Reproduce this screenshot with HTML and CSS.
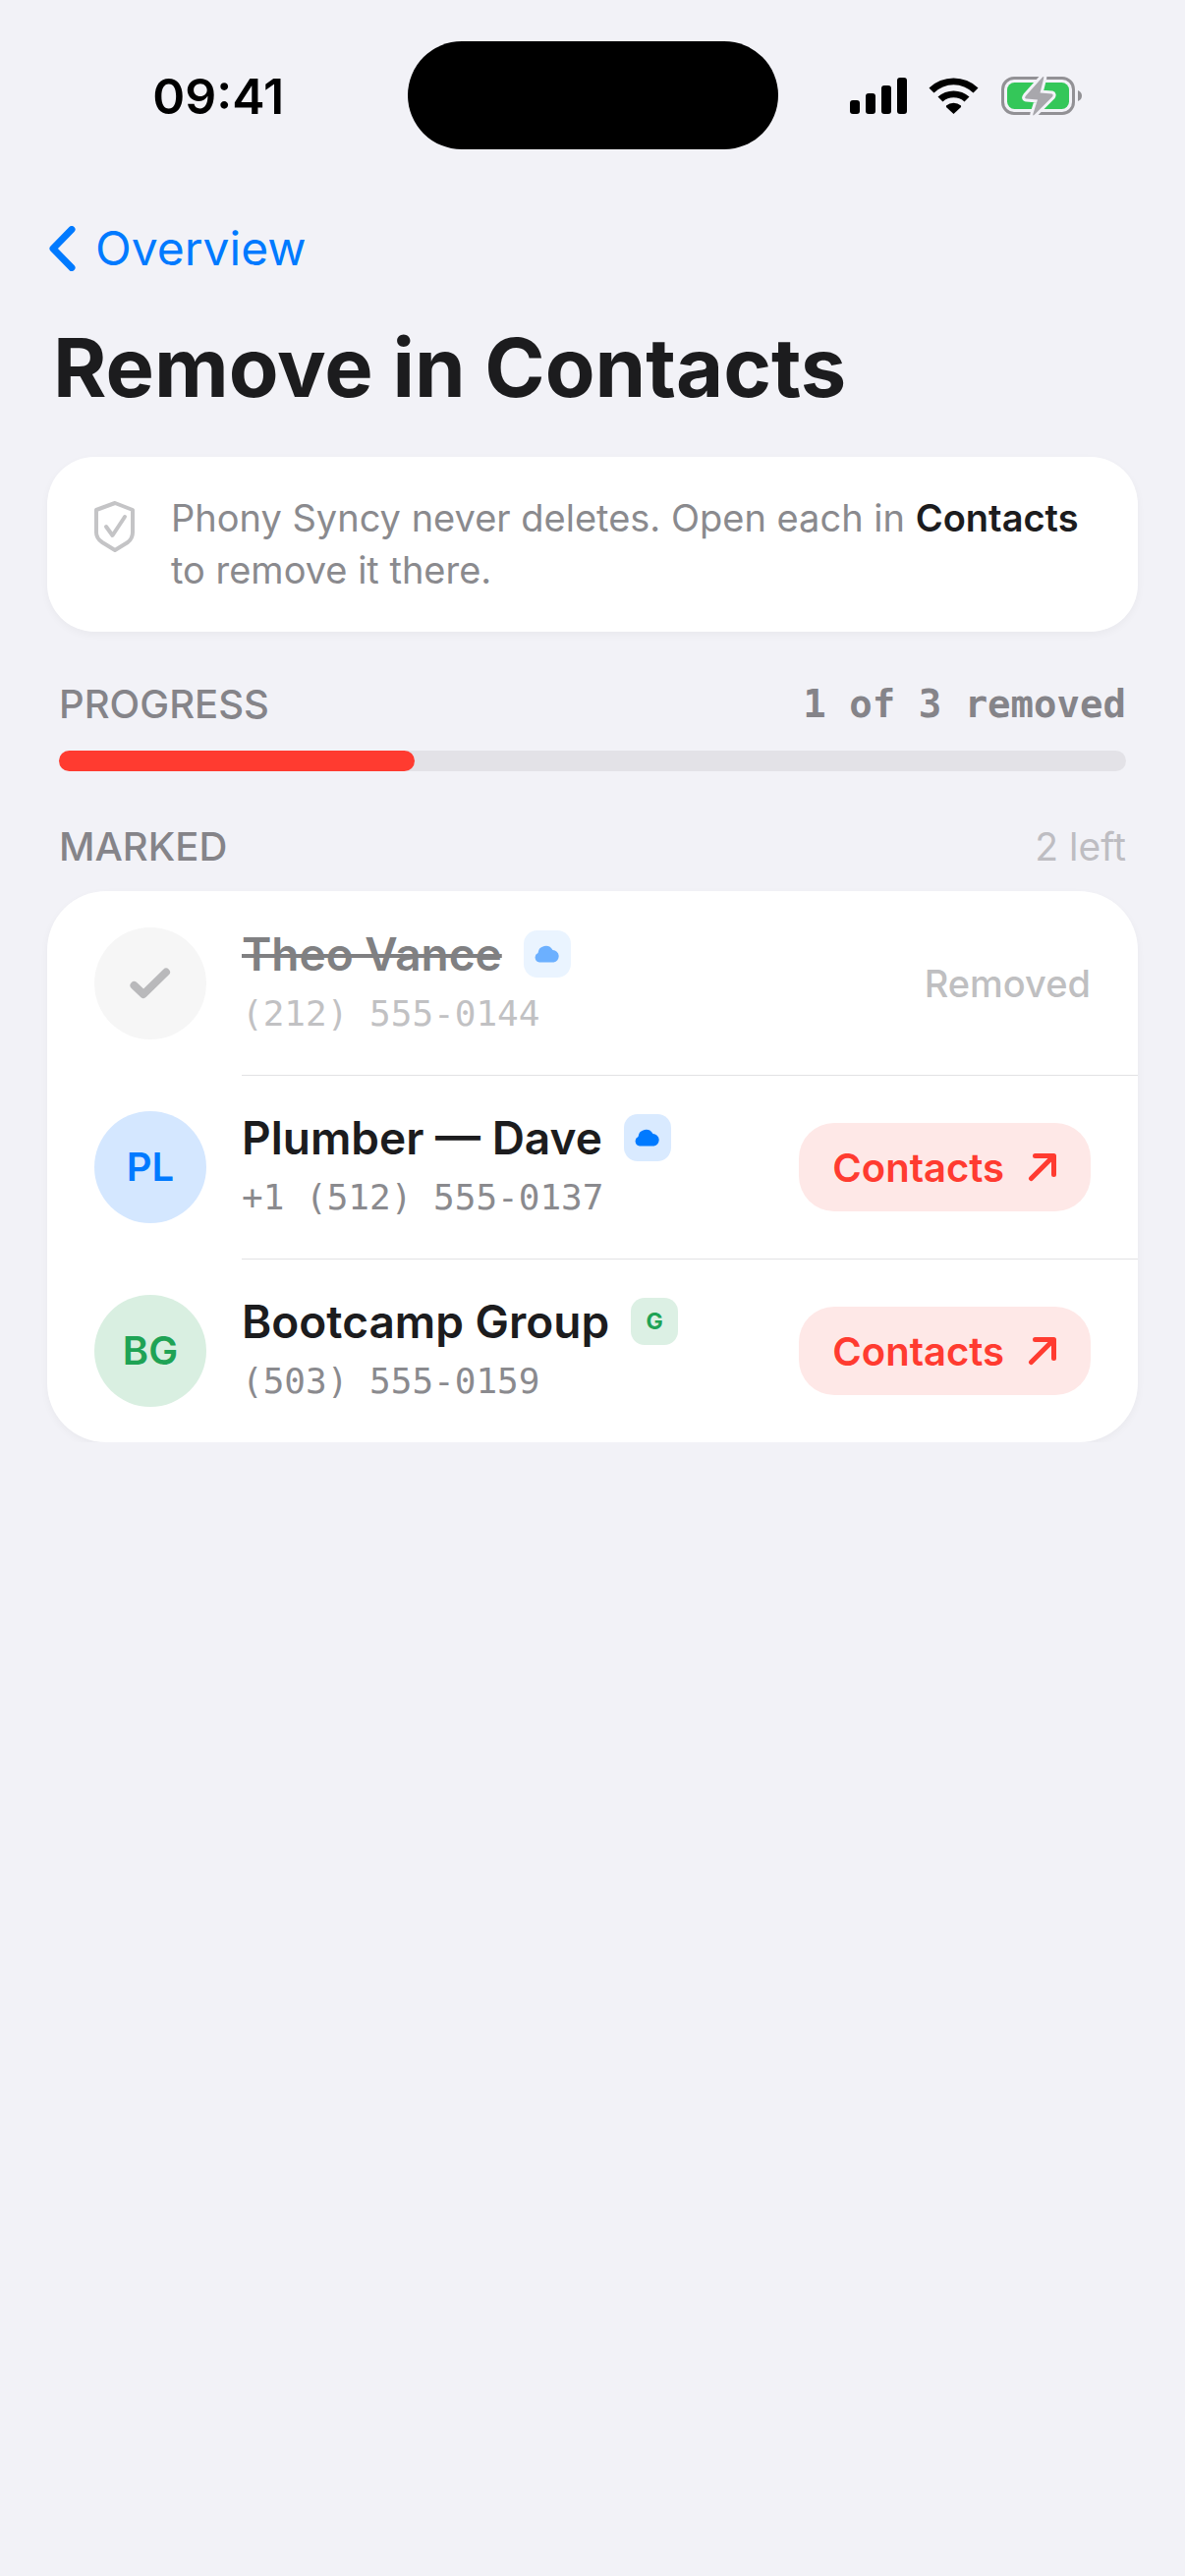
FILE: index.html
```html
<!DOCTYPE html>
<html lang="en">
<head>
<meta charset="utf-8">
<meta name="viewport" content="width=device-width, initial-scale=1">
<title>Remove in Contacts</title>
<link rel="stylesheet" href="styles.css">
</head>
<body>
<header class="status">
  <time class="status-time">09:41</time>
  <div class="island"></div>
  <div class="status-icons">
    <svg width="58" height="38" viewBox="0 0 58 38" aria-hidden="true">
      <rect x="0" y="23" width="10" height="14" rx="3"/>
      <rect x="16" y="16" width="10" height="21" rx="3"/>
      <rect x="32" y="8" width="10" height="29" rx="3"/>
      <rect x="48" y="0" width="10" height="37" rx="3"/>
    </svg>
    <svg width="52" height="38" viewBox="0 0 52 38" aria-hidden="true">
      <path d="M0.500 10.500A36 36 0 0 1 50.500 10.500L45.500 15.500A28.500 28.500 0 0 0 5.500 15.500Z"/>
      <path d="M9.500 19.500A24 24 0 0 1 41.500 19.500L36.500 24.500A16.500 16.500 0 0 0 14.500 24.500Z"/>
      <path d="M18 28.500A12 12 0 0 1 33 28.500Q33.500 29.500 32.500 30.500L25.500 37L18.500 30.500Q17.500 29.500 18 28.500Z"/>
    </svg>
    <svg width="84" height="42" viewBox="0 0 84 42" aria-hidden="true">
      <rect x="1.500" y="2.500" width="72" height="36" rx="11.500" fill="none" stroke="#929195" stroke-width="3"/>
      <rect x="6" y="7" width="63" height="27" rx="7.500" fill="#34c759"/>
      <path d="M78 15Q82 16.500 82 20.500Q82 24.500 78 26Z" fill="#929195"/>
      <path d="M42 1.500Q44 0 43 3.500L39.500 17.500L51.500 18.500Q53.500 19 52 21.500L34 39.500Q31.500 42 32.500 38.500L37 24.500L25.500 23.500Q23 23 25 20.500Z" fill="#a8a7ac" stroke="#f2f2f7" stroke-width="6" paint-order="stroke" stroke-linejoin="round"/>
    </svg>
  </div>
</header>

<main class="page">
  <nav>
    <a class="back" href="#">
      <svg width="28" height="46" viewBox="0 0 28 46" aria-hidden="true"><path d="M23 3.500L4 23L23 42.500" fill="none" stroke="currentColor" stroke-width="7" stroke-linecap="round" stroke-linejoin="round"/></svg>
      Overview
    </a>
  </nav>
  <h1 class="title">Remove in Contacts</h1>

  <section class="note">
    <svg class="note-icon" width="42" height="52" viewBox="0 0 42 52" fill="none" stroke="#c4c4c6" stroke-linecap="round" stroke-linejoin="round" aria-hidden="true">
      <path d="M21 2L39 9V32Q39 38 34 42L21 50L8 42Q2 38 2 32V9Z" stroke-width="4"/>
      <path d="M12 26L18.500 35L31 16" stroke-width="4"/>
    </svg>
    <p class="note-text">Phony Syncy never deletes. Open each in <strong>Contacts</strong> to remove it there.</p>
  </section>

  <section class="progress">
    <div class="section-head">
      <h2 class="section-title" id="progress-label">PROGRESS</h2>
      <span class="count">1 of 3 removed</span>
    </div>
    <div class="track" role="progressbar" aria-labelledby="progress-label" aria-valuemin="0" aria-valuemax="3" aria-valuenow="1"><div class="fill" style="width: 33.300%"></div></div>
  </section>

  <section class="marked">
    <div class="section-head">
      <h2 class="section-title">MARKED</h2>
      <span class="left">2 left</span>
    </div>
    <ul class="list">
      <li class="row removed">
        <span class="avatar">
          <svg width="42" height="32" viewBox="0 0 42 32" aria-hidden="true"><path d="M4.500 18L14 27L37 4.500" fill="none" stroke="currentColor" stroke-width="8" stroke-linecap="round" stroke-linejoin="round"/></svg>
        </span>
        <div class="body">
          <div class="who">
            <div class="name-line">
              <s class="name">Theo Vance</s>
              <span class="badge cloud"><svg width="26" height="18" viewBox="0 0 26 18" aria-hidden="true"><path d="M5 17.500A5 5 0 0 1 3.500 8A8 8 0 0 1 18.500 5A6.300 6.300 0 0 1 19.500 17.500Z"/></svg></span>
            </div>
            <div class="phone">(212) 555-0144</div>
          </div>
          <span class="state">Removed</span>
        </div>
      </li>
      <li class="row">
        <span class="avatar blue">PL</span>
        <div class="body">
          <div class="who">
            <div class="name-line">
              <span class="name">Plumber — Dave</span>
              <span class="badge cloud"><svg width="26" height="18" viewBox="0 0 26 18" aria-hidden="true"><path d="M5 17.500A5 5 0 0 1 3.500 8A8 8 0 0 1 18.500 5A6.300 6.300 0 0 1 19.500 17.500Z"/></svg></span>
            </div>
            <div class="phone">+1 (512) 555-0137</div>
          </div>
          <button class="open" type="button">Contacts
            <svg width="30" height="30" viewBox="0 0 30 30" aria-hidden="true"><path d="M3.500 26.500L26 4M7.500 3.500H26.500V22.500" fill="none" stroke="currentColor" stroke-width="5" stroke-linecap="round" stroke-linejoin="round"/></svg>
          </button>
        </div>
      </li>
      <li class="row">
        <span class="avatar green">BG</span>
        <div class="body">
          <div class="who">
            <div class="name-line">
              <span class="name">Bootcamp Group</span>
              <span class="badge google">G</span>
            </div>
            <div class="phone">(503) 555-0159</div>
          </div>
          <button class="open" type="button">Contacts
            <svg width="30" height="30" viewBox="0 0 30 30" aria-hidden="true"><path d="M3.500 26.500L26 4M7.500 3.500H26.500V22.500" fill="none" stroke="currentColor" stroke-width="5" stroke-linecap="round" stroke-linejoin="round"/></svg>
          </button>
        </div>
      </li>
    </ul>
  </section>
</main>
</body>
</html>
```
FILE: styles.css
```css
* { box-sizing: border-box; }

body {
  margin: 0;
  background: #f2f2f7;
  color: #1c1c1e;
  font-family: Inter, "Liberation Sans", sans-serif;
  font-size: 38px;
}

h1, h2, p, ul { margin: 0; padding: 0; }

.status {
  display: grid;
  grid-template-columns: 1fr 377px 1fr;
  align-items: center;
  padding-top: 42px;
}
.status-time {
  justify-self: center;
  padding: 2px 0 0 30px;
  font-size: 50px;
  font-weight: 600;
  line-height: 60px;
  color: #000;
}
.island {
  height: 110px;
  border-radius: 55px;
  background: #000;
}
.status-icons {
  display: flex;
  align-items: center;
  gap: 22px;
  padding: 2px 0 0 73px;
}

.page { padding: 0 48px; }

.back {
  display: inline-flex;
  align-items: center;
  gap: 19px;
  margin-top: 69px;
  padding-left: 2px;
  font-size: 48px;
  line-height: 64px;
  color: #007aff;
  text-decoration: none;
}

.title {
  padding: 39px 6px 0;
  font-size: 83px;
  font-weight: 700;
  line-height: 100px;
}

.note {
  display: flex;
  gap: 36px;
  margin-top: 41px;
  padding: 36px 48px;
  border-radius: 48px;
  background: #fff;
  box-shadow: 0 3px 9px rgba(0, 0, 0, 0.04);
}
.note-icon { flex: none; margin-top: 9px; }
.note-text { line-height: 53px; color: #8a8a8e; }
.note-text strong { font-weight: 600; color: #1c1c1e; }

.section-head {
  display: flex;
  justify-content: space-between;
  align-items: center;
  padding: 0 12px;
  line-height: 48px;
}
.section-title {
  font-size: 40px;
  font-weight: 500;
  color: #858489;
}
.progress { margin-top: 50px; }
.count {
  font-family: "DejaVu Sans Mono", monospace;
  font-size: 39px;
  font-weight: 700;
  color: #858489;
}
.track {
  height: 21px;
  margin: 23px 12px 0;
  border-radius: 11px;
  background: #e3e2e7;
}
.fill {
  height: 100%;
  border-radius: 11px;
  background: #ff3b30;
}

.marked { margin-top: 53px; }
.left { font-size: 39px; color: #bebdc2; }

.list {
  margin-top: 21px;
  list-style: none;
  border-radius: 60px;
  background: #fff;
  box-shadow: 0 3px 9px rgba(0, 0, 0, 0.04);
}
.row {
  display: flex;
  align-items: center;
  gap: 36px;
  padding-left: 48px;
}
.avatar {
  display: flex;
  flex: none;
  align-items: center;
  justify-content: center;
  width: 114px;
  height: 114px;
  border-radius: 50%;
  font-size: 40px;
  font-weight: 600;
}
.blue { background: #d4e7ff; color: #007aff; }
.green { background: #d9efe1; color: #1fa355; }
.removed .avatar { background: #f6f6f6; color: #b9b9bb; }

.body {
  display: flex;
  flex: 1;
  align-items: center;
  justify-content: space-between;
  min-height: 187px;
  padding-right: 48px;
}
.row + .row .body { border-top: 1px solid #e2e2e4; }

.name-line { display: flex; align-items: center; gap: 22px; }
.name { font-size: 46px; font-weight: 600; line-height: 62px; }
.phone {
  font-family: "DejaVu Sans Mono", monospace;
  font-size: 36px;
  line-height: 60px;
  color: #8a8a8e;
}
.badge {
  display: flex;
  align-items: center;
  justify-content: center;
  width: 48px;
  height: 48px;
  border-radius: 14px;
}
.cloud { background: #d9eaff; fill: #007aff; }
.google {
  background: #dcf0e4;
  color: #1fa355;
  font-size: 23px;
  font-weight: 700;
}
.removed .name { color: #808082; text-decoration-thickness: 4px; }
.removed .phone { color: #c1c1c3; }
.removed .cloud { background: #eaf4ff; fill: #6cb0ff; }
.state { font-weight: 500; color: #bfbfc1; }

.open {
  display: flex;
  align-items: center;
  gap: 24px;
  height: 90px;
  padding: 0 34px;
  border: 0;
  border-radius: 36px;
  background: #fee8e7;
  color: #ff3b30;
  font: inherit;
  font-size: 40px;
  font-weight: 600;
}
```
